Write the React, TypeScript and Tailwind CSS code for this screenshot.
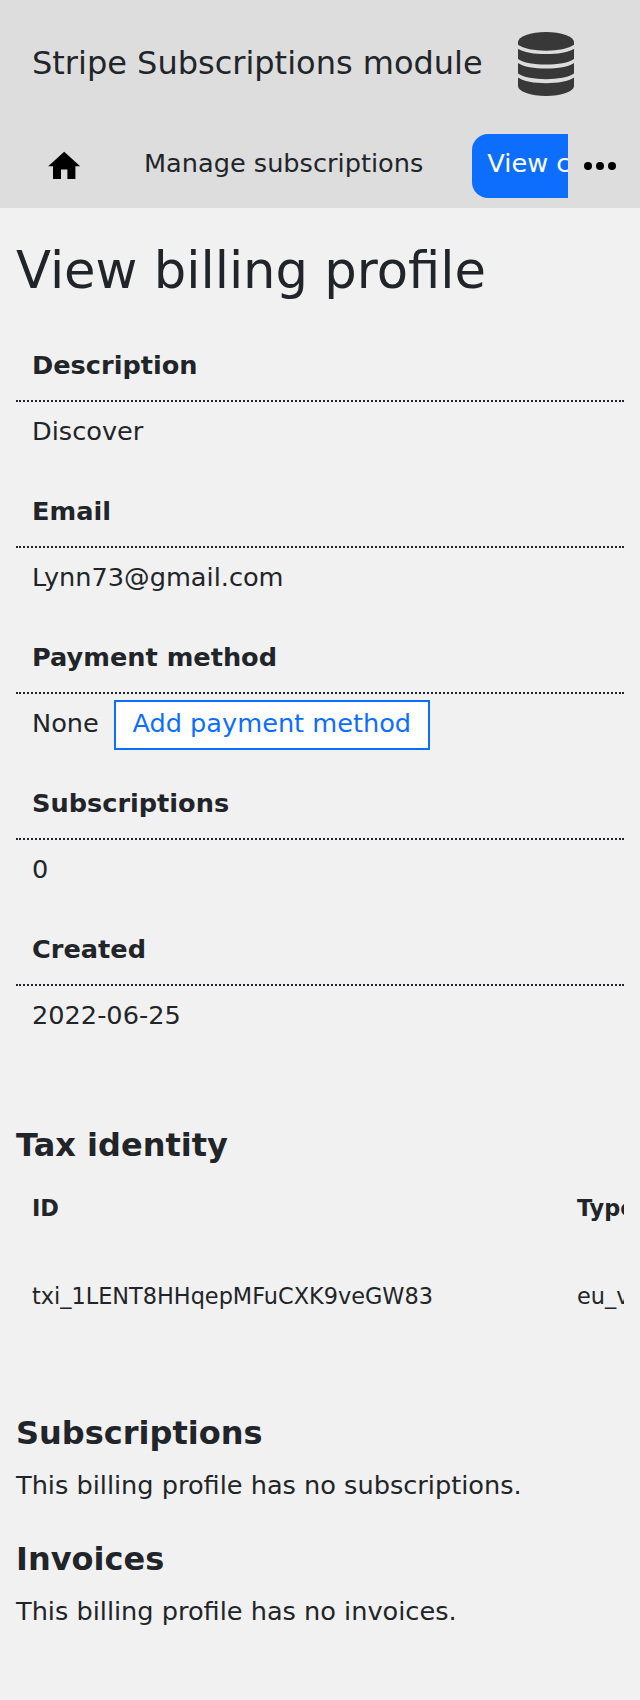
const rows = [
  ["Description", "Discover"],
  ["Email", "Lynn73@gmail.com"],
  ["Payment method", "None"],
  ["Subscriptions", "0"],
  ["Created", "2022-06-25"],
];

function DatabaseIcon() {
  return (
    <svg className="h-16 w-14 fill-[#383838]" viewBox="0 0 56 64">
      <path d="M0 10A28 10 0 0 1 56 10V12.8C46 20.6 10 20.6 0 12.8Z" />
      <path d="M0 16.7C10 23.9 46 23.9 56 16.7V27C46 34.4 10 34.4 0 27Z" />
      <path d="M0 30.9C10 38.4 46 38.4 56 30.9V41.5C46 49 10 49 0 41.5Z" />
      <path d="M0 45.5C10 53.1 46 53.1 56 45.5V54A28 10 0 0 1 0 54Z" />
    </svg>
  );
}

function Header() {
  return (
    <header className="h-[208px] bg-[#dddddd]">
      <div className="flex h-32 items-center pl-8">
        <h1 className="w-[486px] whitespace-nowrap pb-[2px] text-[32px] leading-[48px]">Stripe Subscriptions module</h1>
        <DatabaseIcon />
      </div>
      <nav className="flex h-20 items-start pt-[6px] text-[25.6px] leading-9">
        <a className="flex h-16 w-32 items-center justify-center pt-px">
          <svg className="h-[38.4px] w-[38.4px]" viewBox="0 0 24 24">
            <path d="M10 20v-6h4v6h5v-8h3L12 3 2 12h3v8z" />
          </svg>
        </a>
        <a className="w-[344px] whitespace-nowrap pl-4 pt-[11px]">Manage subscriptions</a>
        <a className="h-16 w-24 overflow-hidden whitespace-nowrap rounded-l-2xl bg-[#0d6efd] pl-[15.36px] pt-[11px] text-white">View customer</a>
        <svg className="ml-4 h-16 w-8" viewBox="0 0 32 64">
          <circle cx="4" cy="32" r="4" />
          <circle cx="16" cy="32" r="4" />
          <circle cx="28" cy="32" r="4" />
        </svg>
      </nav>
    </header>
  );
}

export default function App() {
  return (
    <div className="h-[1700px] w-[640px] overflow-hidden bg-[#f1f1f1] font-['DejaVu_Sans',sans-serif] text-[#212529]">
      <Header />
      <main className="px-4 text-[25.6px] leading-9">
        <h2 className="mt-8 text-[51.2px] leading-[60px]">View billing profile</h2>
        <table className="mt-8 w-full border-collapse">
          {rows.map(([label, value]) => (
            <tbody key={label}>
              <tr>
                <th className="h-[69px] border-b-2 border-dotted border-[#212529] px-4 pt-[15px] text-left align-top font-bold">{label}</th>
              </tr>
              <tr>
                <td className="h-[77px] px-4 align-top">
                  <div className="flex items-start">
                    <span className="pt-[11px]">{value}</span>
                    {label === "Payment method" && (
                      <a className="ml-[15px] mt-[6px] h-[50px] w-[316px] whitespace-nowrap border-2 border-[#0d6efd] bg-white pt-[3px] text-center text-[#0d6efd]">Add payment method</a>
                    )}
                  </div>
                </td>
              </tr>
            </tbody>
          ))}
        </table>
        <h3 className="mt-[63px] text-[32px] font-bold leading-10">Tax identity</h3>
        <div className="mt-[9px] overflow-hidden text-[22.4px]">
          <div className="flex h-[88px] w-[800px] pl-4 pt-4 font-bold">
            <span className="w-[545px]">ID</span>
            <span>Type</span>
          </div>
          <div className="flex h-[88px] w-[800px] pl-4 pt-4">
            <span className="w-[545px]">txi_1LENT8HHqepMFuCXK9veGW83</span>
            <span>eu_vat</span>
          </div>
        </div>
        <h3 className="mt-[63px] text-[32px] font-bold leading-10">Subscriptions</h3>
        <p className="mt-[14px]">This billing profile has no subscriptions.</p>
        <h3 className="mt-9 text-[32px] font-bold leading-10">Invoices</h3>
        <p className="mt-[14px]">This billing profile has no invoices.</p>
      </main>
    </div>
  );
}
